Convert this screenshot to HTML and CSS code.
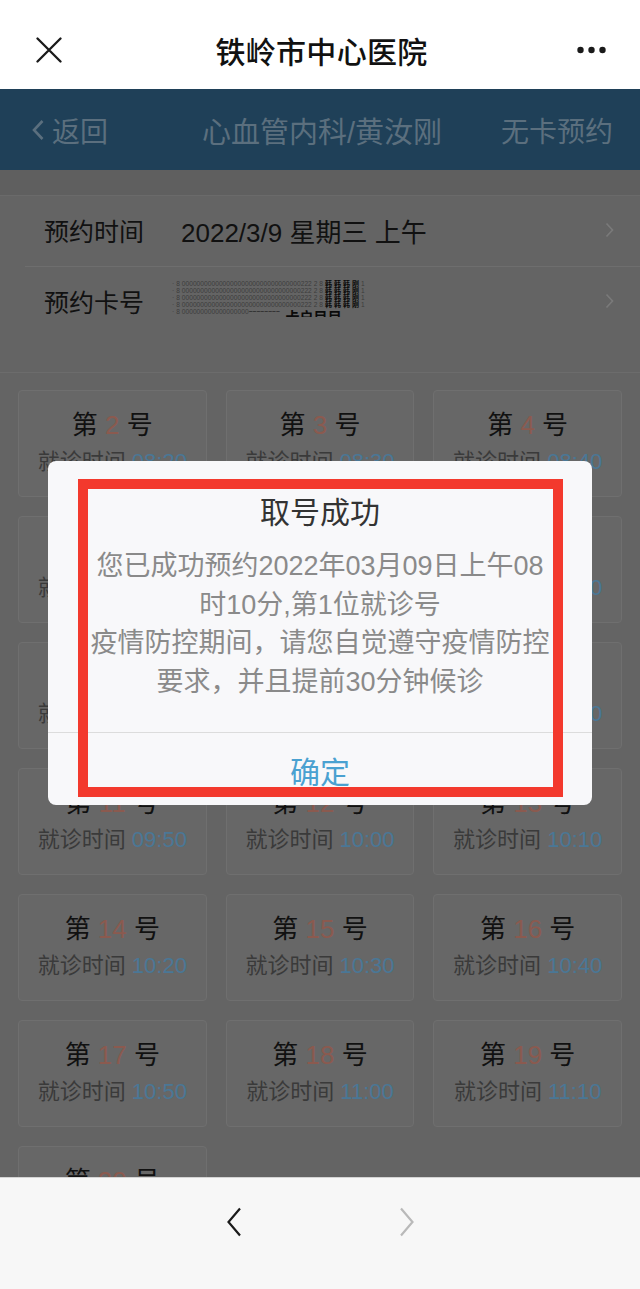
FILE: index.html
```html
<!DOCTYPE html>
<html lang="zh-CN">
<head>
<meta charset="utf-8">
<title>铁岭市中心医院</title>
<link rel="stylesheet" href="styles.css">
</head>
<body>
<div class="app">
  <header class="topbar">
    <span class="tb-close">
      <svg width="26" height="26" viewBox="0 0 26 26"><path d="M1.5 1.5L24.5 24.5M24.5 1.5L1.5 24.5" stroke="#1a1a1a" stroke-width="2.3" fill="none" stroke-linecap="round"/></svg>
    </span>
    <h1 class="tb-title">铁岭市中心医院</h1>
    <span class="tb-more">
      <svg width="30" height="8" viewBox="0 0 30 8"><circle cx="3.5" cy="4" r="3.2" fill="#1a1a1a"/><circle cx="14.5" cy="4" r="3.2" fill="#1a1a1a"/><circle cx="25.5" cy="4" r="3.2" fill="#1a1a1a"/></svg>
    </span>
  </header>

  <main class="webview">
    <nav class="navbar">
      <a class="nav-back">
        <svg width="14" height="22" viewBox="0 0 14 22"><path d="M11.5 2L3 11L11.5 20" stroke="currentColor" stroke-width="2.6" fill="none"/></svg>返回
      </a>
      <span class="nav-title">心血管内科/黄汝刚</span>
      <a class="nav-action">无卡预约</a>
    </nav>

    <section class="info">
      <div class="info-row">
        <span class="info-label">预约时间</span>
        <span class="info-value">2022/3/9 星期三 上午</span>
        <svg class="info-arrow" width="9" height="16" viewBox="0 0 9 16"><path d="M1.5 1.5L7.5 8L1.5 14.5" stroke="currentColor" stroke-width="1.6" fill="none"/></svg>
      </div>
      <div class="info-row">
        <span class="info-label">预约卡号</span>
        <span class="card-mask">
          <span class="blur-line">· 8 00000000000000000000000000000000222 2 8 <b>韩 韩 韩 刚</b> 1</span>
          <span class="blur-line">· 8 00000000000000000000000000000000222 2 8 <b>韩 韩 韩 刚</b> 1</span>
          <span class="blur-line">· 8 00000000000000000000000000000000222 2 8 <b>韩 韩 韩 刚</b> 1</span>
          <span class="blur-line">· 8 00000000000000000000000000000000222 2 8 <b>韩 韩 韩 刚</b> 1</span>
          <span class="blur-line tail">· 8 000000000000000000<i>~~~~~~~~</i>&nbsp;&nbsp;&nbsp;<b>卡户目目</b></span>
        </span>
        <svg class="info-arrow" width="9" height="16" viewBox="0 0 9 16"><path d="M1.5 1.5L7.5 8L1.5 14.5" stroke="currentColor" stroke-width="1.6" fill="none"/></svg>
      </div>
    </section>

    <section class="slots">
      <div class="slot"><div class="slot-no">第 <em>2</em> 号</div><div class="slot-time">就诊时间 <span>08:20</span></div></div>
      <div class="slot"><div class="slot-no">第 <em>3</em> 号</div><div class="slot-time">就诊时间 <span>08:30</span></div></div>
      <div class="slot"><div class="slot-no">第 <em>4</em> 号</div><div class="slot-time">就诊时间 <span>08:40</span></div></div>
      <div class="slot"><div class="slot-no">第 <em>5</em> 号</div><div class="slot-time">就诊时间 <span>08:50</span></div></div>
      <div class="slot"><div class="slot-no">第 <em>6</em> 号</div><div class="slot-time">就诊时间 <span>09:00</span></div></div>
      <div class="slot"><div class="slot-no">第 <em>7</em> 号</div><div class="slot-time">就诊时间 <span>09:10</span></div></div>
      <div class="slot"><div class="slot-no">第 <em>8</em> 号</div><div class="slot-time">就诊时间 <span>09:20</span></div></div>
      <div class="slot"><div class="slot-no">第 <em>9</em> 号</div><div class="slot-time">就诊时间 <span>09:30</span></div></div>
      <div class="slot"><div class="slot-no">第 <em>10</em> 号</div><div class="slot-time">就诊时间 <span>09:40</span></div></div>
      <div class="slot"><div class="slot-no">第 <em>11</em> 号</div><div class="slot-time">就诊时间 <span>09:50</span></div></div>
      <div class="slot"><div class="slot-no">第 <em>12</em> 号</div><div class="slot-time">就诊时间 <span>10:00</span></div></div>
      <div class="slot"><div class="slot-no">第 <em>13</em> 号</div><div class="slot-time">就诊时间 <span>10:10</span></div></div>
      <div class="slot"><div class="slot-no">第 <em>14</em> 号</div><div class="slot-time">就诊时间 <span>10:20</span></div></div>
      <div class="slot"><div class="slot-no">第 <em>15</em> 号</div><div class="slot-time">就诊时间 <span>10:30</span></div></div>
      <div class="slot"><div class="slot-no">第 <em>16</em> 号</div><div class="slot-time">就诊时间 <span>10:40</span></div></div>
      <div class="slot"><div class="slot-no">第 <em>17</em> 号</div><div class="slot-time">就诊时间 <span>10:50</span></div></div>
      <div class="slot"><div class="slot-no">第 <em>18</em> 号</div><div class="slot-time">就诊时间 <span>11:00</span></div></div>
      <div class="slot"><div class="slot-no">第 <em>19</em> 号</div><div class="slot-time">就诊时间 <span>11:10</span></div></div>
      <div class="slot"><div class="slot-no">第 <em>20</em> 号</div><div class="slot-time">就诊时间 <span>11:20</span></div></div>
    </section>

    <div class="modal-layer">
      <div class="dialog">
        <h2 class="dialog-title">取号成功</h2>
        <p class="dialog-body">您已成功预约2022年03月09日上午08时10分,第1位就诊号<br>疫情防控期间，请您自觉遵守疫情防控要求，并且提前30分钟候诊</p>
        <div class="dialog-btn">确定</div>
        <div class="annot"></div>
      </div>
    </div>
  </main>

  <footer class="bottombar">
    <svg width="16" height="30" viewBox="0 0 16 30"><path d="M14 1.5L2.5 15L14 28.5" stroke="#1a1a1a" stroke-width="2.2" fill="none"/></svg>
    <svg width="16" height="30" viewBox="0 0 16 30"><path d="M2 1.5L13.5 15L2 28.5" stroke="#b9b9b9" stroke-width="2.2" fill="none"/></svg>
  </footer>
</div>
</body>
</html>
```

FILE: styles.css
```css
* { box-sizing: border-box; }

html, body {
  margin: 0;
  padding: 0;
}

body {
  width: 640px;
  height: 1289px;
  overflow: hidden;
  font-family: "Liberation Sans", "Noto Sans CJK SC", sans-serif;
  background: #ffffff;
}

.app {
  display: flex;
  flex-direction: column;
  height: 1289px;
}

/* ---------- WeChat top bar ---------- */
.topbar {
  height: 89px;
  flex: none;
  background: #ffffff;
  display: grid;
  grid-template-columns: 1fr auto 1fr;
  align-items: center;
  padding: 10px 33px 0 36px;
}

.tb-close { display: flex; justify-self: start; }
.tb-more { display: flex; justify-self: end; }

.tb-title {
  margin: 0;
  font-size: 30px;
  font-weight: 500;
  color: #111111;
  letter-spacing: 0.3px;
}

/* ---------- web view (shown dimmed behind the modal) ---------- */
.webview {
  position: relative;
  height: 1088px;
  flex: none;
  overflow: hidden;
  background: #5f5f5f;
}

.navbar {
  height: 81px;
  background: #1f4058;
  color: #5b6f7e;
  display: grid;
  grid-template-columns: 1fr auto 1fr;
  align-items: center;
  padding: 0 27px 0 31px;
  font-size: 28px;
}

.nav-back {
  justify-self: start;
  display: flex;
  align-items: center;
  gap: 7px;
}

.nav-title {
  font-size: 29px;
}

.nav-action {
  justify-self: end;
}

/* ---------- info rows ---------- */
.info {
  margin-top: 25px;
  background: #646464;
  border-top: 1px solid #6a6a6a;
  padding-bottom: 36px;
}

.info-row {
  height: 70px;
  margin-left: 25px;
  padding: 0 26px 2px 19px;
  display: flex;
  align-items: center;
  color: #111111;
}

.info-row + .info-row {
  border-top: 1px solid #6e6e6e;
}

.info-label {
  width: 137px;
  font-size: 25px;
}

.info-value {
  font-size: 26px;
}

.info-arrow {
  margin-left: auto;
  color: #7a7a7a;
}

.card-mask {
  display: flex;
  flex-direction: column;
  width: 200px;
  overflow: hidden;
  margin-left: -9px;
  margin-top: -4px;
}

.blur-line {
  display: block;
  white-space: nowrap;
  font-size: 6.6px;
  line-height: 7px;
  color: #3c3c3c;
  letter-spacing: 0.05px;
}

.blur-line b {
  color: #0a0a0a;
  font-weight: 700;
  font-size: 7px;
}

.blur-line.tail {
  height: 9px;
  overflow: hidden;
}

.blur-line.tail i {
  font-style: normal;
  font-weight: 700;
  color: #2a2a2a;
}

.blur-line.tail b {
  font-size: 14px;
  line-height: 14px;
  vertical-align: -8px;
}

/* ---------- slot grid ---------- */
.slots {
  background: #646464;
  border-top: 1px solid #6c6c6c;
  display: grid;
  grid-template-columns: repeat(3, 1fr);
  gap: 19px;
  padding: 17px 18px;
}

.slot {
  height: 107px;
  background: #676767;
  border: 1px solid #6f6f6f;
  border-radius: 4px;
  text-align: center;
  padding-top: 18px;
}

.slot-no {
  font-size: 26px;
  line-height: 32px;
  color: #111111;
}

.slot-no em {
  font-style: normal;
  color: #8b5a4f;
}

.slot-time {
  margin-top: 6px;
  font-size: 22px;
  line-height: 30px;
  color: #3a3a3a;
}

.slot-time span {
  color: #4a7796;
}

/* ---------- modal ---------- */
.modal-layer {
  position: absolute;
  top: 0;
  left: 0;
  width: 640px;
  height: 1088px;
  display: flex;
  align-items: center;
  justify-content: center;
}

.dialog {
  position: relative;
  width: 544px;
  height: 344px;
  background: #f8f8fa;
  border-radius: 8px;
  text-align: center;
  padding-top: 32px;
  display: flex;
  flex-direction: column;
}

.dialog-title {
  margin: 0;
  font-size: 30px;
  line-height: 40px;
  font-weight: 400;
  color: #333333;
}

.dialog-body {
  margin: 14px 0 0;
  padding: 0 39px 31px;
  font-size: 27px;
  line-height: 38.5px;
  color: #8a8a8a;
}

.dialog-btn {
  margin-top: auto;
  height: 73px;
  border-top: 1px solid #dcdcdc;
  display: flex;
  align-items: center;
  justify-content: center;
  font-size: 30px;
  color: #4aa1d1;
  padding-top: 2px;
}

.annot {
  position: absolute;
  left: 30px;
  top: 18px;
  width: 485px;
  height: 318px;
  border: 10px solid #f3392d;
  pointer-events: none;
}

/* ---------- bottom toolbar ---------- */
.bottombar {
  flex: 1;
  background: #f7f7f7;
  border-top: 1px solid #d4d4d4;
  display: flex;
  justify-content: center;
  align-items: flex-start;
  gap: 157px;
  padding-top: 29px;
}
```
